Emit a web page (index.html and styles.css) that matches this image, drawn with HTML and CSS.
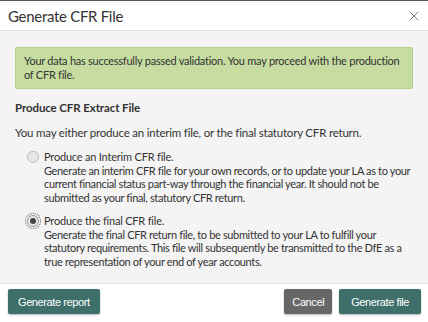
FILE: index.html
```html
<!doctype html>
<html>
<head>
<meta charset="utf-8" />
<title>Generate CFR File</title>
<link rel="stylesheet" href="styles.css">
</head>
<body>

<div class="modal">
	<header class="modal-head">
		<h1>Generate CFR File</h1>
		<button class="close" type="button" aria-label="Close">
			<svg width="10" height="10" viewBox="0 0 10 10"><path d="M0.5 0.5 L9.5 9.5 M9.5 0.5 L0.5 9.5" stroke="#777" stroke-width="1" fill="none"/></svg>
		</button>
	</header>

	<section class="modal-body">
		<div class="alert">Your data has successfully passed validation. You may proceed with the production<br>of CFR file.</div>

		<h2>Produce CFR Extract File</h2>
		<p class="intro">You may either produce an interim file, or the final statutory CFR return.</p>

		<label class="option">
			<span class="radio"></span>
			<span class="text">
				<span class="title">Produce an Interim CFR file.</span>
				<span class="desc">Generate an interim CFR file for your own records, or to update your LA as to your<br>current financial status part-way through the financial year. It should not be<br>submitted as your final, statutory CFR return.</span>
			</span>
		</label>

		<label class="option">
			<span class="radio checked"></span>
			<span class="text">
				<span class="title">Produce the final CFR file.</span>
				<span class="desc">Generate the final CFR return file, to be submitted to your LA to fulfill your<br>statutory requirements. This file will subsequently be transmitted to the DfE as a<br>true representation of your end of year accounts.</span>
			</span>
		</label>
	</section>

	<footer class="modal-foot">
		<button class="btn teal wide" type="button">Generate report</button>
		<span class="spacer"></span>
		<button class="btn grey" type="button">Cancel</button>
		<button class="btn teal" type="button">Generate file</button>
	</footer>
</div>

</body>
</html>
```
FILE: styles.css
```css
* {
	margin: 0;
	padding: 0;
	box-sizing: border-box;
}
html, body {
	width: 100%;
	height: 100%;
	overflow: hidden;
}
body {
	font-family: Lato, "Open Sans", sans-serif;
	font-size: 11px;
	letter-spacing: -0.2px;
	color: #333;
	background: #fff;
}
.modal {
	border-top: 1px solid #555;
	display: flex;
	flex-direction: column;
	height: 100%;
}
.modal-head {
	height: 30px;
	flex: none;
	display: flex;
	align-items: center;
	padding: 0 9px 0 8px;
	border-bottom: 1px solid #e3e3e3;
}
.modal-head h1 {
	flex: 1;
	font-size: 15px;
	letter-spacing: -0.3px;
	font-weight: normal;
	color: #333;
}
.close {
	border: 0;
	background: none;
	width: 10px;
	height: 10px;
	display: flex;
}
.modal-body {
	background: #f4f4f4;
	padding: 16px 15px 0;
	height: 252px;
	flex: none;
	overflow: hidden;
}
.alert {
	background: #c6dca0;
	border: 1px solid #b3d08a;
	border-radius: 2px;
	padding: 6px 8px;
	line-height: 14px;
	height: 42px;
	letter-spacing: -0.25px;
	white-space: nowrap;
}
h2 {
	font-size: 11.5px;
	letter-spacing: -0.1px;
	font-weight: bold;
	margin: 11px 0 10px;
	line-height: 15px;
}
.intro {
	font-size: 11.5px;
	line-height: 15px;
	margin-bottom: 10px;
}
.option {
	display: flex;
	padding-left: 12px;
	margin-bottom: 10px;
}
.radio {
	width: 12px;
	height: 12px;
	border-radius: 50%;
	border: 1px solid #bbb;
	background: #e8e8e8;
	margin: 1px 5px 0 0;
	flex: none;
	position: relative;
}
.radio.checked {
	outline: 1px dotted #555;
	outline-offset: 1px;
	border-color: #999;
}
.radio.checked::after {
	content: "";
	position: absolute;
	left: 2px;
	top: 2px;
	width: 6px;
	height: 6px;
	border-radius: 50%;
	background: #444;
}
.text {
	display: flex;
	flex-direction: column;
	line-height: 13.5px;
	white-space: nowrap;
}
.desc {
	letter-spacing: -0.35px;
}
.modal-foot {
	border-top: 1px solid #e3e3e3;
	display: flex;
	align-items: flex-start;
	gap: 7px;
	padding: 5px 7px 0 8px;
	flex: 1;
}
.spacer {
	flex: 1;
}
.btn {
	height: 25px;
	border: 0;
	border-radius: 2px;
	color: #fff;
	font-family: "Liberation Sans", Arial, sans-serif;
	font-size: 11px;
	letter-spacing: -0.4px;
	padding: 0 12px;
	box-shadow: 0 1px 2px rgba(0,0,0,0.3);
}
.wide {
	padding: 0 10px;
}
.teal {
	background: #3e6f6b;
}
.grey {
	background: #676767;
	padding: 0 8px;
}
```
